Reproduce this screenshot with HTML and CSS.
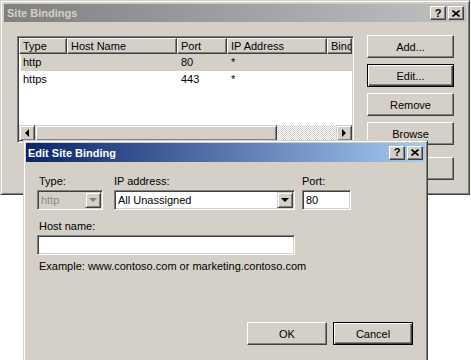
FILE: index.html
```html
<!DOCTYPE html>
<html>
<head>
    <title>Site Bindings</title>
    <link rel="stylesheet" href="styles.css">
</head>
<body>
    <div class="desktop">

        <div class="window main-window">
            <div class="titlebar inactive">
                <span class="title">Site Bindings</span>
                <div class="caption-buttons">
                    <span class="cap-btn">?</span>
                    <span class="cap-btn">
                        <svg width="8" height="7" viewBox="0 0 8 7"><path d="M0.5 0.5 L7.5 6.5 M7.5 0.5 L0.5 6.5" stroke="#000" stroke-width="1.6"/></svg>
                    </span>
                </div>
            </div>

            <div class="bindings-body">
                <div class="listview">
                    <div class="lv-header">
                        <div class="col c-type">Type</div>
                        <div class="col c-host">Host Name</div>
                        <div class="col c-port">Port</div>
                        <div class="col c-ip">IP Address</div>
                        <div class="col c-bind">Bind</div>
                    </div>
                    <div class="lv-rows">
                        <div class="lv-row selected">
                            <div class="cell c-type">http</div>
                            <div class="cell c-host"></div>
                            <div class="cell c-port">80</div>
                            <div class="cell c-ip">*</div>
                            <div class="cell c-bind"></div>
                        </div>
                        <div class="lv-row">
                            <div class="cell c-type">https</div>
                            <div class="cell c-host"></div>
                            <div class="cell c-port">443</div>
                            <div class="cell c-ip">*</div>
                            <div class="cell c-bind"></div>
                        </div>
                    </div>
                    <div class="hscroll">
                        <div class="scroll-btn"><span class="arrow-left"></span></div>
                        <div class="scroll-thumb"></div>
                        <div class="scroll-track"></div>
                        <div class="scroll-btn"><span class="arrow-right"></span></div>
                    </div>
                </div>

                <div class="side-buttons">
                    <button class="btn">Add...</button>
                    <button class="btn default">Edit...</button>
                    <button class="btn">Remove</button>
                    <button class="btn">Browse</button>
                    <button class="btn close-btn">Close</button>
                </div>
            </div>
        </div>

        <div class="window dialog">
            <div class="titlebar active">
                <span class="title">Edit Site Binding</span>
                <div class="caption-buttons">
                    <span class="cap-btn">?</span>
                    <span class="cap-btn">
                        <svg width="8" height="7" viewBox="0 0 8 7"><path d="M0.5 0.5 L7.5 6.5 M7.5 0.5 L0.5 6.5" stroke="#000" stroke-width="1.6"/></svg>
                    </span>
                </div>
            </div>

            <div class="dialog-body">
                <div class="field-row">
                    <div class="field f-type">
                        <div class="label indent">Type:</div>
                        <div class="combo disabled">
                            <span class="combo-text">http</span>
                            <span class="drop-btn"><span class="arrow-down"></span></span>
                        </div>
                    </div>
                    <div class="field f-ip">
                        <div class="label">IP address:</div>
                        <div class="combo">
                            <span class="combo-text">All Unassigned</span>
                            <span class="drop-btn"><span class="arrow-down"></span></span>
                        </div>
                    </div>
                    <div class="field f-port">
                        <div class="label">Port:</div>
                        <div class="textbox">80</div>
                    </div>
                </div>

                <div class="label indent host-label">Host name:</div>
                <div class="textbox host-box"></div>

                <div class="hint">Example: www.contoso.com or marketing.contoso.com</div>

                <div class="dialog-buttons">
                    <button class="btn">OK</button>
                    <button class="btn default">Cancel</button>
                </div>
            </div>
        </div>

    </div>
</body>
</html>
```

FILE: styles.css
```css
* {
    box-sizing: border-box;
}

body {
    margin: 0;
    background-color: #fff;
    font-family: "Liberation Sans", Arial, sans-serif;
    font-size: 11px;
    color: #000;
}

.desktop {
    position: relative;
    width: 471px;
    height: 360px;
    overflow: hidden;
}

/* windows */

.window {
    position: absolute;
    display: flex;
    flex-direction: column;
    background-color: #d4d0c8;
    border: 1px solid;
    border-color: #d4d0c8 #404040 #404040 #d4d0c8;
    box-shadow: inset 1px 1px #fff, inset -1px -1px #808080;
}

.main-window {
    left: 0;
    top: 0;
    width: 470px;
    height: 195px;
    padding: 3px;
}

.dialog {
    left: 23px;
    top: 140px;
    width: 405px;
    height: 240px;
    padding: 2px;
}

.titlebar {
    display: flex;
    align-items: center;
    justify-content: space-between;
    height: 18px;
    padding: 0 2px 0 3px;
    font-weight: bold;
}

.dialog .titlebar {
    height: 19px;
    padding-left: 2px;
}

.inactive {
    background: linear-gradient(to right, #808080, #c0c0c0);
    color: #d4d0c8;
}

.active {
    background: linear-gradient(to right, #0a246a, #a6caf0);
    color: #fff;
}

.caption-buttons {
    display: flex;
    gap: 2px;
}

.cap-btn {
    display: flex;
    align-items: center;
    justify-content: center;
    width: 16px;
    height: 14px;
    background-color: #d4d0c8;
    border: 1px solid;
    border-color: #fff #404040 #404040 #fff;
    box-shadow: inset -1px -1px #808080;
    color: #000;
    font-size: 11px;
    font-weight: bold;
    line-height: 1;
}

/* buttons */

.btn {
    height: 23px;
    padding: 0;
    font-family: inherit;
    font-size: 11px;
    color: #000;
    background-color: #d4d0c8;
    border: 1px solid;
    border-color: #fff #404040 #404040 #fff;
    box-shadow: inset -1px -1px #808080;
}

.btn.default {
    border: 1px solid #000;
    box-shadow: inset 1px 1px #fff, inset -1px -1px #404040, inset -2px -2px #808080;
}

/* site bindings */

.bindings-body {
    flex: 1;
    display: flex;
    gap: 13px;
    padding: 13px 12px 11px 13px;
}

.listview {
    display: flex;
    flex-direction: column;
    width: 337px;
    height: 107px;
    margin-top: 1px;
    padding: 1px;
    background-color: #fff;
    border: 1px solid;
    border-color: #808080 #fff #fff #808080;
    box-shadow: inset 1px 1px #404040, inset -1px -1px #d4d0c8;
}

.lv-header {
    display: flex;
    height: 16px;
}

.col {
    height: 16px;
    line-height: 14px;
    padding-left: 3px;
    background-color: #d4d0c8;
    border: 1px solid;
    border-color: #fff #404040 #404040 #fff;
    box-shadow: inset -1px -1px #808080;
    white-space: nowrap;
    overflow: hidden;
}

.c-type { width: 48px; }
.c-host { width: 110px; }
.c-port { width: 50px; }
.c-ip { width: 100px; }
.c-bind { flex: 1; }

.lv-rows {
    flex: 1;
}

.lv-row {
    display: flex;
    height: 17px;
    line-height: 17px;
}

.lv-row.selected {
    background: linear-gradient(to right, transparent 2px, #d4d0c8 2px);
}

.cell {
    padding-left: 4px;
    white-space: nowrap;
}

.hscroll {
    display: flex;
    height: 16px;
}

.scroll-btn {
    display: flex;
    align-items: center;
    justify-content: center;
    width: 16px;
    background-color: #d4d0c8;
    border: 1px solid;
    border-color: #d4d0c8 #404040 #404040 #d4d0c8;
    box-shadow: inset 1px 1px #fff, inset -1px -1px #808080;
}

.arrow-left {
    border-top: 4px solid transparent;
    border-bottom: 4px solid transparent;
    border-right: 4px solid #000;
}

.arrow-right {
    border-top: 4px solid transparent;
    border-bottom: 4px solid transparent;
    border-left: 4px solid #000;
}

.scroll-thumb {
    width: 242px;
    background-color: #d4d0c8;
    border: 1px solid;
    border-color: #d4d0c8 #404040 #404040 #d4d0c8;
    box-shadow: inset 1px 1px #fff, inset -1px -1px #808080;
}

.scroll-track {
    flex: 1;
    background-image: repeating-conic-gradient(#fff 0 25%, #d4d0c8 0 50%);
    background-size: 2px 2px;
}

.side-buttons {
    display: flex;
    flex-direction: column;
    gap: 6px;
    width: 90px;
}

.close-btn {
    margin-top: auto;
}

/* edit dialog */

.dialog-body {
    display: flex;
    flex-direction: column;
    padding: 12px 12px 0 11px;
}

.field-row {
    display: flex;
}

.f-type {
    width: 66px;
    margin-right: 11px;
}

.f-ip {
    width: 181px;
    margin-right: 7px;
}

.f-port {
    width: 49px;
}

.label {
    height: 14px;
    line-height: 14px;
    margin-bottom: 2px;
    white-space: nowrap;
}

.label.indent {
    padding-left: 2px;
}

.host-label {
    margin-top: 9px;
}

.combo,
.textbox {
    display: flex;
    align-items: center;
    height: 20px;
    padding: 2px;
    background-color: #fff;
    border: 1px solid;
    border-color: #808080 #fff #fff #808080;
    box-shadow: inset 1px 1px #404040, inset -1px -1px #d4d0c8;
}

.textbox {
    padding-left: 3px;
}

.combo-text {
    flex: 1;
    padding-left: 1px;
    white-space: nowrap;
}

.combo.disabled {
    background-color: #d4d0c8;
    color: #8c8c8c;
}

.drop-btn {
    display: flex;
    align-items: center;
    justify-content: center;
    width: 16px;
    height: 16px;
    margin-right: -1px;
    background-color: #d4d0c8;
    border: 1px solid;
    border-color: #d4d0c8 #404040 #404040 #d4d0c8;
    box-shadow: inset 1px 1px #fff, inset -1px -1px #808080;
}

.arrow-down {
    border-left: 4px solid transparent;
    border-right: 4px solid transparent;
    border-top: 4px solid #000;
}

.disabled .arrow-down {
    border-top-color: #808080;
}

.host-box {
    width: 258px;
}

.hint {
    margin-top: 4px;
    padding-left: 2px;
    line-height: 14px;
}

.dialog-buttons {
    display: flex;
    justify-content: flex-end;
    gap: 6px;
    margin-top: 49px;
}

.dialog-buttons .btn {
    width: 80px;
}
```
